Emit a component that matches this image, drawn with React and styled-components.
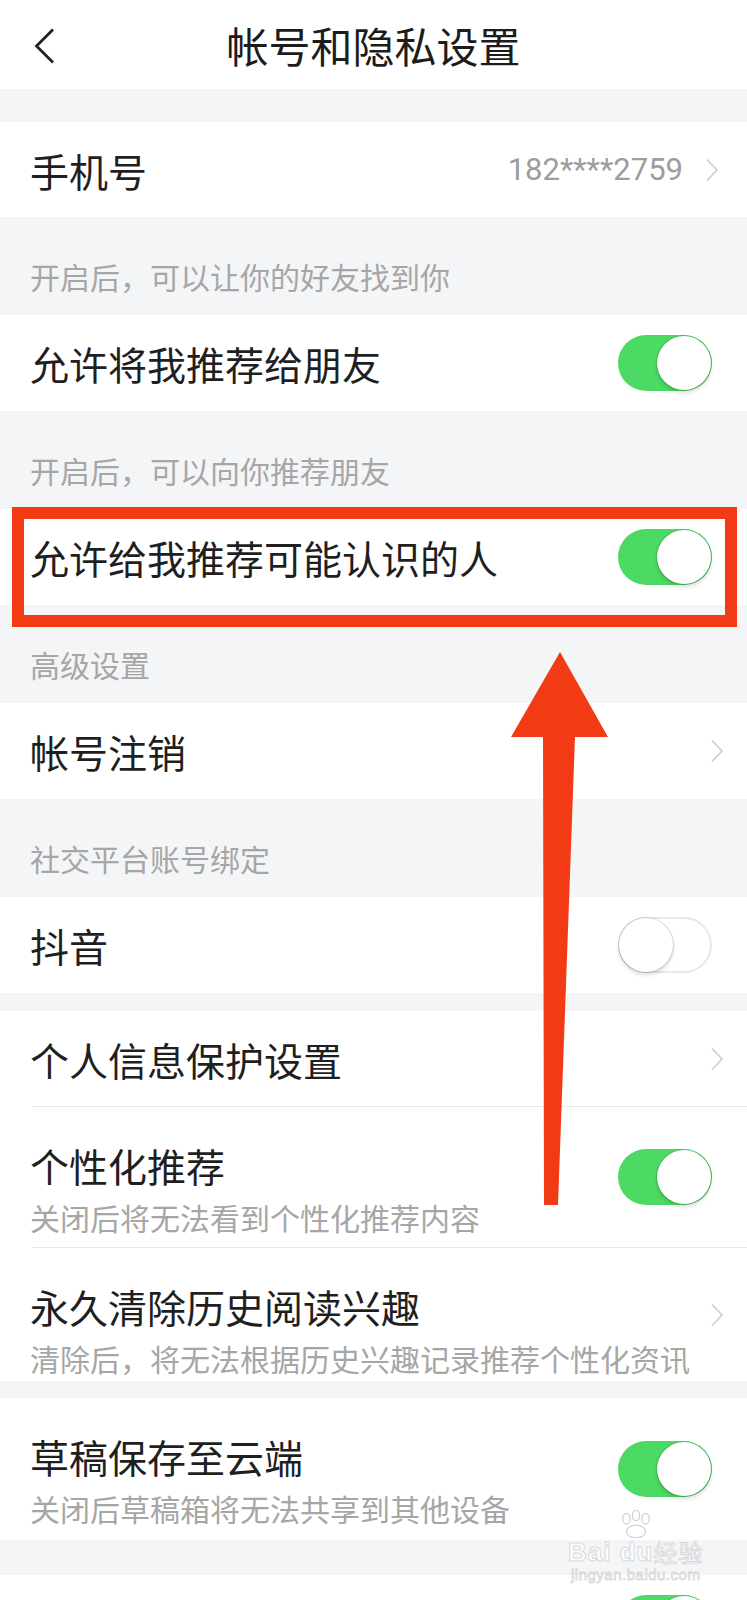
import React from "react";
import styled, { createGlobalStyle } from "styled-components";

const GlobalStyle = createGlobalStyle`
  html, body {
    margin: 0;
    padding: 0;
    background: #f4f5f7;
  }
  body {
    font-family: "Noto Sans CJK SC", "Noto Sans", sans-serif;
    color: #1f1f1f;
  }
`;

const Page = styled.div`
  position: relative;
  width: 747px;
  min-height: 1600px;
  background: #f4f5f7;
  overflow: hidden;
`;

const Header = styled.header`
  display: grid;
  grid-template-columns: 1fr auto 1fr;
  align-items: center;
  height: 89px;
  background: #fff;
`;

const BackButton = styled.span`
  display: flex;
  align-items: center;
  padding-left: 34px;
  padding-top: 3px;
`;

const Title = styled.h1`
  margin: 0;
  font-size: 42px;
  font-weight: 400;
  line-height: 50px;
  color: #1c1c1c;
`;

const Gap = styled.div`
  height: ${(p) => p.$h}px;
`;

const SectionTitle = styled.div`
  box-sizing: border-box;
  height: ${(p) => p.$h || 98}px;
  padding: 41px 30px 0;
  font-size: 30px;
  line-height: 36px;
  color: #a6a6a6;
`;

const Row = styled.div`
  box-sizing: border-box;
  display: flex;
  align-items: center;
  justify-content: space-between;
  height: ${(p) => p.$h || 96}px;
  padding: 0 35px 0 30px;
  background: #fff;
`;

const DividerRow = styled.div`
  padding-left: 32px;
  background: #fff;

  &::after {
    content: "";
    display: block;
    height: 1px;
    background: #e9e9ec;
  }
`;

const TextCol = styled.div`
  display: flex;
  flex-direction: column;
  align-self: flex-start;
  padding-top: 36px;
`;

const Label = styled.span`
  font-size: 39px;
  line-height: 44px;
  color: #1f1f1f;
  white-space: nowrap;
`;

const Sub = styled.span`
  margin-top: 12px;
  font-size: 30px;
  line-height: 36px;
  color: #a6a6a6;
  white-space: nowrap;
`;

const Right = styled.div`
  display: flex;
  align-items: center;
  margin-right: 5px;
`;

const Value = styled.span`
  font-family: Roboto, "Liberation Sans", sans-serif;
  font-size: 31px;
  color: #9d9d9d;
  margin-right: 22px;
`;

const ChevronWrap = styled.span`
  display: flex;
  margin-right: -12px;
`;

const Toggle = styled.span`
  position: relative;
  box-sizing: border-box;
  display: inline-block;
  flex: none;
  width: 94px;
  height: 56px;
  border-radius: 28px;
  background: ${(p) => (p.$on ? "#4cd964" : "#fff")};
  border: ${(p) => (p.$on ? "none" : "2px solid #e8e8e8")};

  &::after {
    content: "";
    position: absolute;
    top: ${(p) => (p.$on ? 1 : -1)}px;
    left: ${(p) => (p.$on ? 39 : -1)}px;
    width: 54px;
    height: 54px;
    border-radius: 50%;
    background: #fff;
    box-shadow: 0 0 0 1px rgba(0, 0, 0, 0.13), 0 3px 4px rgba(0, 0, 0, 0.14);
  }
`;

const Overlay = styled.svg`
  position: absolute;
  top: 0;
  left: 0;
  pointer-events: none;
`;

const Watermark = styled.div`
  position: absolute;
  left: 568px;
  top: 1510px;
  display: flex;
  flex-direction: column;
  align-items: center;
  color: rgba(255, 255, 255, 0.9);
  -webkit-text-stroke: 1px rgba(150, 150, 150, 0.35);
  pointer-events: none;
`;

const WmMain = styled.div`
  display: flex;
  align-items: center;
  font-family: "Liberation Sans", sans-serif;
  font-size: 26px;
  font-weight: 700;
  line-height: 28px;
  letter-spacing: 1px;

  span {
    font-family: "Noto Sans CJK SC", sans-serif;
    font-weight: 400;
    font-size: 24px;
  }
`;

const WmSub = styled.div`
  font-family: "Liberation Sans", sans-serif;
  font-size: 15px;
  line-height: 17px;
  letter-spacing: 0.5px;
`;

const Chevron = () => (
  <ChevronWrap>
    <svg width="14" height="24" viewBox="0 0 14 24">
      <path d="M2 1.5 L12 12 L2 22.5" fill="none" stroke="#cdcdcd" strokeWidth="1.6" />
    </svg>
  </ChevronWrap>
);

const App = () => {
  return (
    <Page>
      <GlobalStyle />
      <Header>
        <BackButton>
          <svg width="22" height="36" viewBox="0 0 22 36">
            <path d="M19 1.5 L2.5 18 L19 34.5" fill="none" stroke="#222" strokeWidth="2.8" />
          </svg>
        </BackButton>
        <Title>帐号和隐私设置</Title>
        <span />
      </Header>
      <Gap $h={33} />

      <Row $h={95}>
        <Label>手机号</Label>
        <Right>
          <Value>182****2759</Value>
          <Chevron />
        </Right>
      </Row>

      <SectionTitle>开启后，可以让你的好友找到你</SectionTitle>
      <Row>
        <Label>允许将我推荐给朋友</Label>
        <Toggle $on />
      </Row>

      <SectionTitle>开启后，可以向你推荐朋友</SectionTitle>
      <Row>
        <Label>允许给我推荐可能认识的人</Label>
        <Toggle $on />
      </Row>

      <SectionTitle>高级设置</SectionTitle>
      <Row>
        <Label>帐号注销</Label>
        <Chevron />
      </Row>

      <SectionTitle>社交平台账号绑定</SectionTitle>
      <Row>
        <Label>抖音</Label>
        <Toggle />
      </Row>

      <Gap $h={18} />
      <Row $h={95}>
        <Label>个人信息保护设置</Label>
        <Chevron />
      </Row>
      <DividerRow />
      <Row $h={140}>
        <TextCol>
          <Label>个性化推荐</Label>
          <Sub>关闭后将无法看到个性化推荐内容</Sub>
        </TextCol>
        <Toggle $on />
      </Row>
      <DividerRow />
      <Row $h={133}>
        <TextCol>
          <Label>永久清除历史阅读兴趣</Label>
          <Sub>清除后，将无法根据历史兴趣记录推荐个性化资讯</Sub>
        </TextCol>
        <Chevron />
      </Row>

      <Gap $h={17} />
      <Row $h={142}>
        <TextCol>
          <Label>草稿保存至云端</Label>
          <Sub>关闭后草稿箱将无法共享到其他设备</Sub>
        </TextCol>
        <Toggle $on />
      </Row>

      <Gap $h={35} />
      <Row $h={95}>
        <span />
        <Toggle $on />
      </Row>

      <Overlay width="747" height="1600" viewBox="0 0 747 1600">
        <rect x="18" y="513" width="713" height="108" fill="none" stroke="#f23a14" strokeWidth="12" />
        <polygon
          points="560,652 608,737 575,737 558,1205 544,1205 543,737 511,737"
          fill="#f23a14"
        />
      </Overlay>

      <Watermark>
        <svg width="36" height="28" viewBox="0 0 34 26">
          <g fill="none" stroke="rgba(150,150,150,0.45)" strokeWidth="1.2">
            <ellipse cx="8" cy="8" rx="3.5" ry="5" />
            <ellipse cx="17" cy="5" rx="3.5" ry="5" />
            <ellipse cx="26" cy="8" rx="3.5" ry="5" />
            <ellipse cx="17" cy="20" rx="9" ry="6" />
          </g>
        </svg>
        <WmMain>
          Bai du<span>经验</span>
        </WmMain>
        <WmSub>jingyan.baidu.com</WmSub>
      </Watermark>
    </Page>
  );
};

export default App;
